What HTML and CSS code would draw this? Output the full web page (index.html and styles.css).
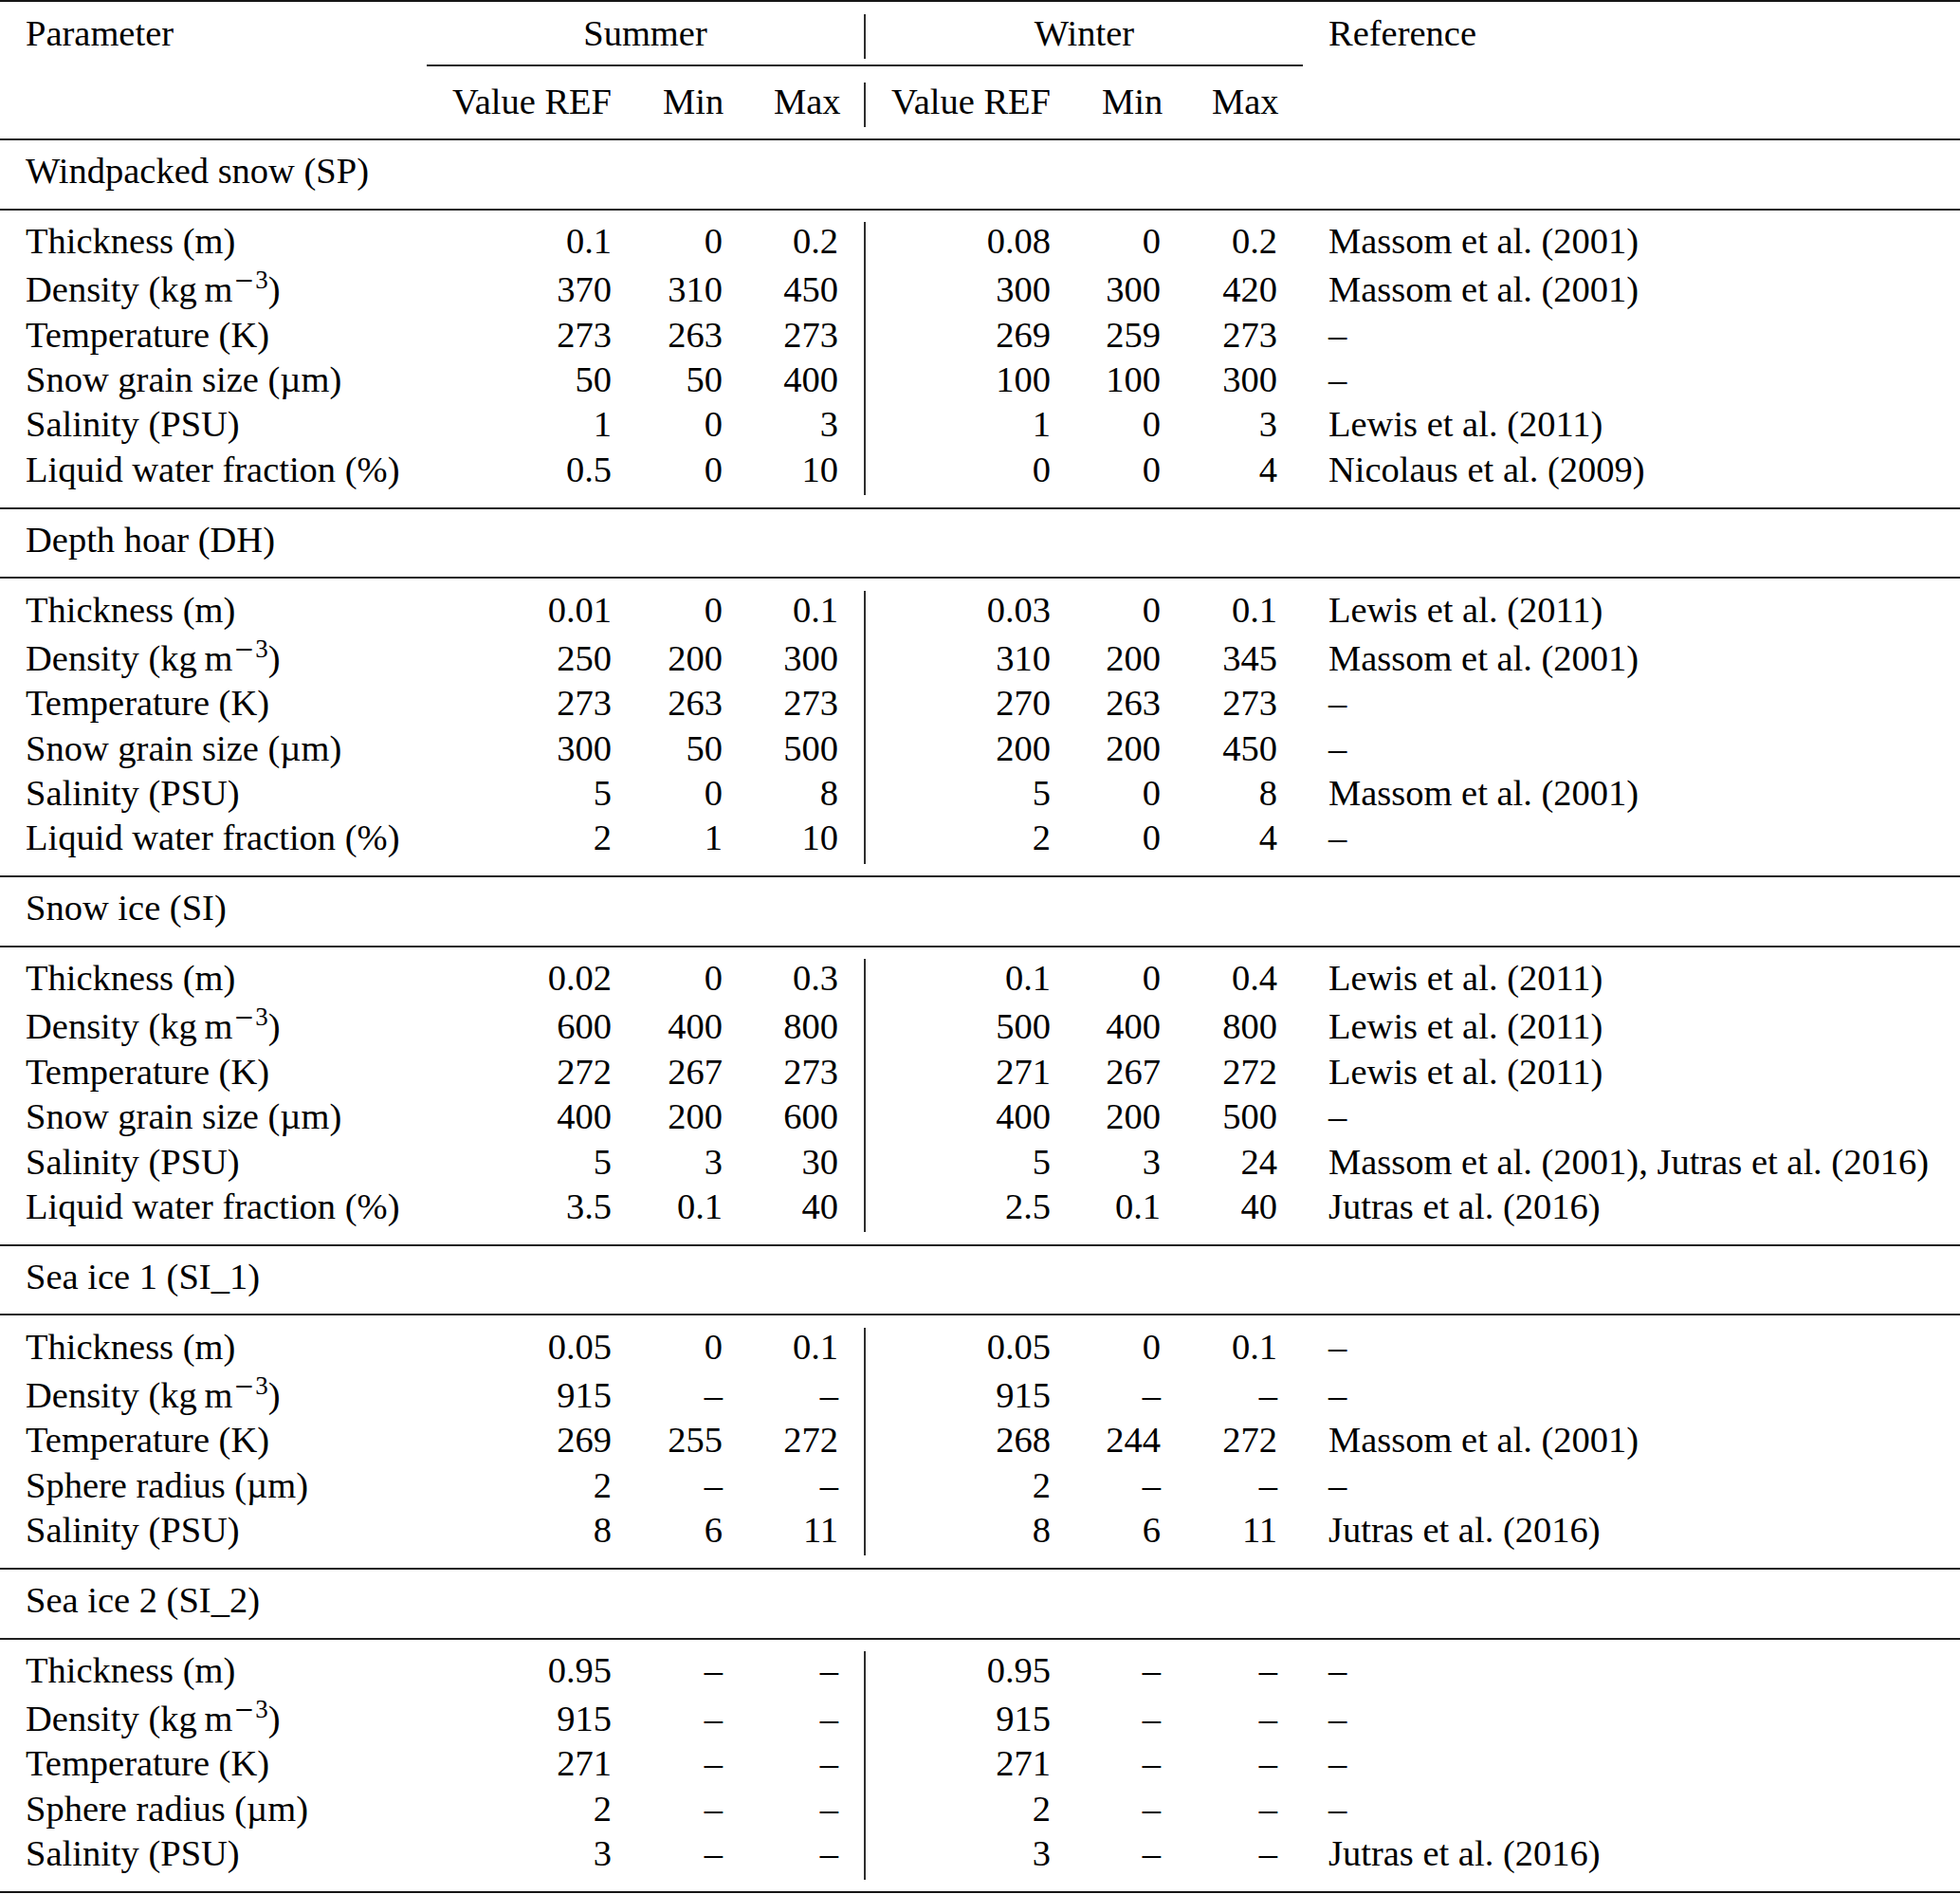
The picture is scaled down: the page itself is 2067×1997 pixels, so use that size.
FILE: index.html
```html
<!DOCTYPE html>
<html lang="en">
<head>
<meta charset="utf-8">
<title>Snow and ice layer parameters</title>
<link rel="stylesheet" href="styles.css">
</head>
<body>
<div class="tbl">
  <div class="head">
    <div class="grid hrow">
      <div class="c">Parameter</div>
      <div class="c grp">Summer</div>
      <div class="c grp vl">Winter</div>
      <div class="c">Reference</div>
    </div>
    <div class="grid cmid"><div class="cmid-line"></div></div>
    <div class="grid hrow">
      <div class="c"></div>
      <div class="c n">Value REF</div>
      <div class="c n">Min</div>
      <div class="c n">Max</div>
      <div class="c n vl">Value REF</div>
      <div class="c n">Min</div>
      <div class="c n">Max</div>
      <div class="c"></div>
    </div>
  </div>

  <div class="sec-title">Windpacked snow (SP)</div>
  <div class="block">
    <div class="grid row"><div class="c">Thickness (m)</div><div class="c n">0.1</div><div class="c n">0</div><div class="c n">0.2</div><div class="c n vl">0.08</div><div class="c n">0</div><div class="c n">0.2</div><div class="c">Massom et al. (2001)</div></div>
    <div class="grid row tall"><div class="c">Density (kg&#8201;m<sup><span class="minus">−</span>3</sup>)</div><div class="c n">370</div><div class="c n">310</div><div class="c n">450</div><div class="c n vl">300</div><div class="c n">300</div><div class="c n">420</div><div class="c">Massom et al. (2001)</div></div>
    <div class="grid row"><div class="c">Temperature (K)</div><div class="c n">273</div><div class="c n">263</div><div class="c n">273</div><div class="c n vl">269</div><div class="c n">259</div><div class="c n">273</div><div class="c">–</div></div>
    <div class="grid row"><div class="c">Snow grain size (µm)</div><div class="c n">50</div><div class="c n">50</div><div class="c n">400</div><div class="c n vl">100</div><div class="c n">100</div><div class="c n">300</div><div class="c">–</div></div>
    <div class="grid row"><div class="c">Salinity (PSU)</div><div class="c n">1</div><div class="c n">0</div><div class="c n">3</div><div class="c n vl">1</div><div class="c n">0</div><div class="c n">3</div><div class="c">Lewis et al. (2011)</div></div>
    <div class="grid row"><div class="c">Liquid water fraction (%)</div><div class="c n">0.5</div><div class="c n">0</div><div class="c n">10</div><div class="c n vl">0</div><div class="c n">0</div><div class="c n">4</div><div class="c">Nicolaus et al. (2009)</div></div>
  </div>

  <div class="sec-title">Depth hoar (DH)</div>
  <div class="block">
    <div class="grid row"><div class="c">Thickness (m)</div><div class="c n">0.01</div><div class="c n">0</div><div class="c n">0.1</div><div class="c n vl">0.03</div><div class="c n">0</div><div class="c n">0.1</div><div class="c">Lewis et al. (2011)</div></div>
    <div class="grid row tall"><div class="c">Density (kg&#8201;m<sup><span class="minus">−</span>3</sup>)</div><div class="c n">250</div><div class="c n">200</div><div class="c n">300</div><div class="c n vl">310</div><div class="c n">200</div><div class="c n">345</div><div class="c">Massom et al. (2001)</div></div>
    <div class="grid row"><div class="c">Temperature (K)</div><div class="c n">273</div><div class="c n">263</div><div class="c n">273</div><div class="c n vl">270</div><div class="c n">263</div><div class="c n">273</div><div class="c">–</div></div>
    <div class="grid row"><div class="c">Snow grain size (µm)</div><div class="c n">300</div><div class="c n">50</div><div class="c n">500</div><div class="c n vl">200</div><div class="c n">200</div><div class="c n">450</div><div class="c">–</div></div>
    <div class="grid row"><div class="c">Salinity (PSU)</div><div class="c n">5</div><div class="c n">0</div><div class="c n">8</div><div class="c n vl">5</div><div class="c n">0</div><div class="c n">8</div><div class="c">Massom et al. (2001)</div></div>
    <div class="grid row"><div class="c">Liquid water fraction (%)</div><div class="c n">2</div><div class="c n">1</div><div class="c n">10</div><div class="c n vl">2</div><div class="c n">0</div><div class="c n">4</div><div class="c">–</div></div>
  </div>

  <div class="sec-title">Snow ice (SI)</div>
  <div class="block">
    <div class="grid row"><div class="c">Thickness (m)</div><div class="c n">0.02</div><div class="c n">0</div><div class="c n">0.3</div><div class="c n vl">0.1</div><div class="c n">0</div><div class="c n">0.4</div><div class="c">Lewis et al. (2011)</div></div>
    <div class="grid row tall"><div class="c">Density (kg&#8201;m<sup><span class="minus">−</span>3</sup>)</div><div class="c n">600</div><div class="c n">400</div><div class="c n">800</div><div class="c n vl">500</div><div class="c n">400</div><div class="c n">800</div><div class="c">Lewis et al. (2011)</div></div>
    <div class="grid row"><div class="c">Temperature (K)</div><div class="c n">272</div><div class="c n">267</div><div class="c n">273</div><div class="c n vl">271</div><div class="c n">267</div><div class="c n">272</div><div class="c">Lewis et al. (2011)</div></div>
    <div class="grid row"><div class="c">Snow grain size (µm)</div><div class="c n">400</div><div class="c n">200</div><div class="c n">600</div><div class="c n vl">400</div><div class="c n">200</div><div class="c n">500</div><div class="c">–</div></div>
    <div class="grid row"><div class="c">Salinity (PSU)</div><div class="c n">5</div><div class="c n">3</div><div class="c n">30</div><div class="c n vl">5</div><div class="c n">3</div><div class="c n">24</div><div class="c">Massom et al. (2001), Jutras et al. (2016)</div></div>
    <div class="grid row"><div class="c">Liquid water fraction (%)</div><div class="c n">3.5</div><div class="c n">0.1</div><div class="c n">40</div><div class="c n vl">2.5</div><div class="c n">0.1</div><div class="c n">40</div><div class="c">Jutras et al. (2016)</div></div>
  </div>

  <div class="sec-title">Sea ice 1 (SI_1)</div>
  <div class="block">
    <div class="grid row"><div class="c">Thickness (m)</div><div class="c n">0.05</div><div class="c n">0</div><div class="c n">0.1</div><div class="c n vl">0.05</div><div class="c n">0</div><div class="c n">0.1</div><div class="c">–</div></div>
    <div class="grid row tall"><div class="c">Density (kg&#8201;m<sup><span class="minus">−</span>3</sup>)</div><div class="c n">915</div><div class="c n">–</div><div class="c n">–</div><div class="c n vl">915</div><div class="c n">–</div><div class="c n">–</div><div class="c">–</div></div>
    <div class="grid row"><div class="c">Temperature (K)</div><div class="c n">269</div><div class="c n">255</div><div class="c n">272</div><div class="c n vl">268</div><div class="c n">244</div><div class="c n">272</div><div class="c">Massom et al. (2001)</div></div>
    <div class="grid row"><div class="c">Sphere radius (µm)</div><div class="c n">2</div><div class="c n">–</div><div class="c n">–</div><div class="c n vl">2</div><div class="c n">–</div><div class="c n">–</div><div class="c">–</div></div>
    <div class="grid row"><div class="c">Salinity (PSU)</div><div class="c n">8</div><div class="c n">6</div><div class="c n">11</div><div class="c n vl">8</div><div class="c n">6</div><div class="c n">11</div><div class="c">Jutras et al. (2016)</div></div>
  </div>

  <div class="sec-title">Sea ice 2 (SI_2)</div>
  <div class="block">
    <div class="grid row"><div class="c">Thickness (m)</div><div class="c n">0.95</div><div class="c n">–</div><div class="c n">–</div><div class="c n vl">0.95</div><div class="c n">–</div><div class="c n">–</div><div class="c">–</div></div>
    <div class="grid row tall"><div class="c">Density (kg&#8201;m<sup><span class="minus">−</span>3</sup>)</div><div class="c n">915</div><div class="c n">–</div><div class="c n">–</div><div class="c n vl">915</div><div class="c n">–</div><div class="c n">–</div><div class="c">–</div></div>
    <div class="grid row"><div class="c">Temperature (K)</div><div class="c n">271</div><div class="c n">–</div><div class="c n">–</div><div class="c n vl">271</div><div class="c n">–</div><div class="c n">–</div><div class="c">–</div></div>
    <div class="grid row"><div class="c">Sphere radius (µm)</div><div class="c n">2</div><div class="c n">–</div><div class="c n">–</div><div class="c n vl">2</div><div class="c n">–</div><div class="c n">–</div><div class="c">–</div></div>
    <div class="grid row"><div class="c">Salinity (PSU)</div><div class="c n">3</div><div class="c n">–</div><div class="c n">–</div><div class="c n vl">3</div><div class="c n">–</div><div class="c n">–</div><div class="c">Jutras et al. (2016)</div></div>
  </div>
</div>
</body>
</html>
```

FILE: styles.css
```css
html, body {
  margin: 0;
  padding: 0;
  background: #ffffff;
}

.tbl {
  width: 2067px;
  border-top: 2px solid #151515;
  border-bottom: 2px solid #151515;
  font-family: "Liberation Serif", "Times New Roman", serif;
  font-size: 38.5px;
  line-height: 40.3px;
  color: #000000;
}

.grid {
  display: grid;
  grid-template-columns: 450px 222px 117px 122px 224px 116px 123px 693px;
}

.c {
  box-sizing: border-box;
  padding: 0 27px 7.1px 27px;
  white-space: nowrap;
  min-height: 47.4px;
}

.n {
  text-align: right;
}

.vl {
  border-left: 2px solid #2e2e2e;
}

.grp {
  grid-column: span 3;
  text-align: center;
}

.head {
  padding-top: 13px;
  padding-bottom: 11.6px;
}

.cmid {
  padding-top: 6px;
  padding-bottom: 16.6px;
}

.cmid-line {
  grid-column: 2 / 8;
  border-top: 2px solid #202020;
}

.sec-title {
  border-top: 2px solid #202020;
  padding: 12.25px 27px 19.35px 27px;
  white-space: nowrap;
}

.block {
  border-top: 2px solid #202020;
  padding: 12.25px 0;
}

.tall > .c {
  padding-top: 3.8px;
}

sup {
  font-size: 27px;
  line-height: 0;
  vertical-align: 14.3px;
  margin-left: 1px;
}

.minus {
  font-family: "DejaVu Serif", "Liberation Serif", serif;
  font-size: 26px;
  margin-right: 1px;
}
```
